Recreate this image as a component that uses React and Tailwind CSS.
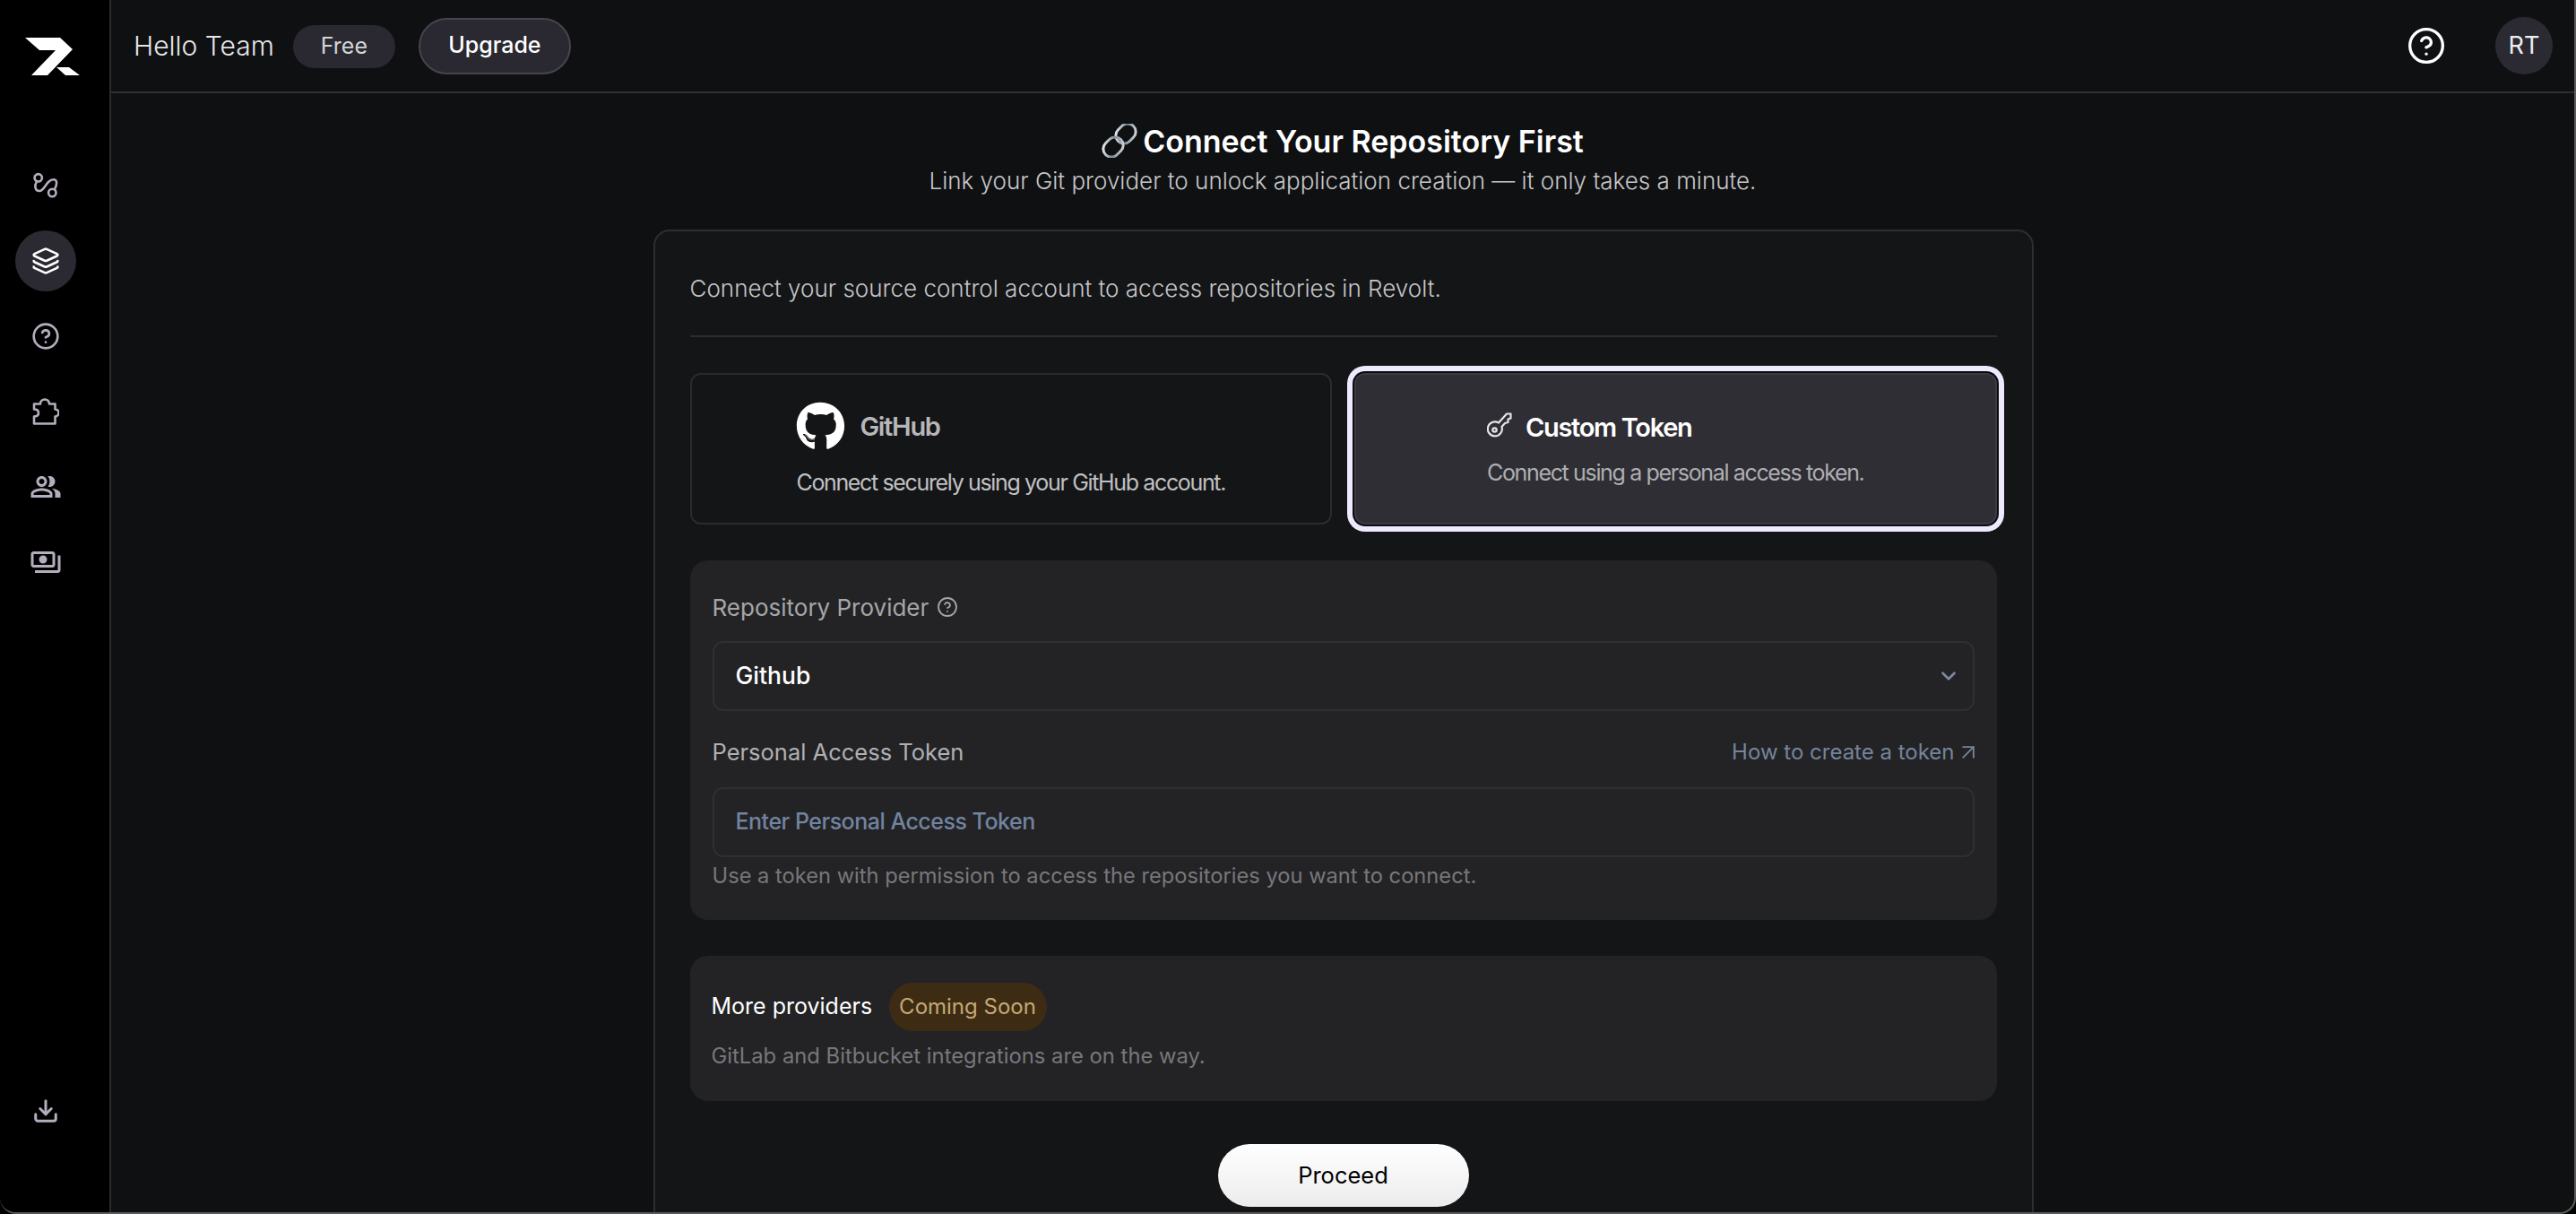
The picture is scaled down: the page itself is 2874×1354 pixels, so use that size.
import React from 'react';
import { ChevronDown, CircleHelp, Download, Layers, ArrowUpRight } from 'lucide-react';
import { FaGithub } from 'react-icons/fa';
import { MdOutlinePeopleAlt, MdOutlinePayments } from 'react-icons/md';

const Logo = () => (
  <svg width="62" height="42" viewBox="0 0 62 42" fill="#ffffff">
    <path d="M0 0H39L53 13L25 42H7L34 14H16Z" />
    <path d="M35 33H49L61 42H45Z" />
  </svg>
);

const RouteIcon = () => (
  <svg width="30" height="30" viewBox="0 0 30 30" fill="none" stroke="#b4adbd" strokeWidth="2.6" strokeLinecap="round">
    <circle cx="6.7" cy="6.3" r="4.2" />
    <circle cx="22.3" cy="23" r="4.2" />
    <path d="M5 10.5C2 15 3 21 8 21C12 21 14 15 18 11C22 7 28 7 27 13C27 15 26 17 25 19" />
  </svg>
);

const PuzzleIcon = () => (
  <svg width="30" height="30" viewBox="0 0 30 30" fill="none" stroke="#b4adbd" strokeWidth="2.6" strokeLinejoin="round">
    <path d="M2 28.5H25.5V20.5C28.5 20.5 29.5 18 29.5 16.5C29.5 14.5 28 12.5 25.5 12.5V6.5H19C19 3.5 17 1.5 14 1.5C11 1.5 9 3.5 9 6.5H2V12.5C5 12.5 7 14 7 16.5C7 19 5 20.5 2 20.5Z" />
  </svg>
);

const KeyIcon = () => (
  <svg width="28" height="28" viewBox="0 0 28 28" fill="none" stroke="#e5e5e8" strokeWidth="2.2" strokeLinejoin="round" className="shrink-0 -mt-[5px]">
    <path d="M13 11.5L22 1.5H26.5V6.5L23.5 7.5V11L20 12L16.5 16A8 8 0 1 1 13 11.5Z" />
    <circle cx="8.5" cy="19.5" r="2.2" />
  </svg>
);

const LinkEmoji = () => (
  <svg width="40" height="38" viewBox="0 0 40 38" fill="none" strokeWidth="3">
    <defs>
      <linearGradient id="chain" x1="0" y1="1" x2="1" y2="0">
        <stop offset="0" stopColor="#ffffff" />
        <stop offset="0.5" stopColor="#7f8b96" />
        <stop offset="1" stopColor="#dfe6ea" />
      </linearGradient>
    </defs>
    <rect x="-9" y="-6" width="18" height="24" rx="9" transform="translate(27 11) rotate(45) translate(0 -6)" stroke="url(#chain)" />
    <rect x="-9" y="-6" width="18" height="24" rx="9" transform="translate(13 26) rotate(45) translate(0 -6)" stroke="url(#chain)" />
  </svg>
);

const NavItem = ({ active, children }) => (
  <div className={`w-[68px] h-[68px] rounded-full flex items-center justify-center ${active ? 'bg-[#2b2a32] text-white' : 'text-[#b4adbd]'}`}>
    {children}
  </div>
);

const Sidebar = () => (
  <aside className="w-[124px] shrink-0 h-full bg-black border-r-2 border-[#2a2a2c] flex flex-col">
    <div className="h-[173px] w-full pt-[42px] pl-[28px]">
      <Logo />
    </div>
    <nav className="flex flex-col gap-4 ml-[17px]">
      <NavItem><RouteIcon /></NavItem>
      <NavItem active><Layers size={32} strokeWidth={2} /></NavItem>
      <NavItem><CircleHelp size={32} strokeWidth={2} /></NavItem>
      <NavItem><PuzzleIcon /></NavItem>
      <NavItem><MdOutlinePeopleAlt size={36} /></NavItem>
      <NavItem><MdOutlinePayments size={36} /></NavItem>
    </nav>
    <div className="mt-auto mb-[98px] ml-[36px]">
      <Download size={30} strokeWidth={2.4} className="text-[#b4adbd]" />
    </div>
  </aside>
);

const Header = () => (
  <header className="h-[104px] shrink-0 border-b-2 border-[#2c2f36] flex items-center pl-[25px] pr-[24px]">
    <span className="text-[30px] font-light text-[#e6e6e8]">Hello Team</span>
    <span className="ml-[21px] mt-[2px] h-[48px] w-[114px] rounded-full bg-[#2a2932] flex items-center justify-center text-[25px] text-[#d4d4d8]">Free</span>
    <button className="ml-[26px] h-[63px] w-[170px] rounded-full bg-[#2a2932] border-2 border-[#45444f] text-[25px] font-medium text-white">Upgrade</button>
    <CircleHelp size={44} strokeWidth={1.8} className="ml-auto text-white" />
    <div className="ml-[55px] w-[64px] h-[64px] rounded-full bg-[#2b2a32] flex items-center justify-center text-[27px] text-[#eeeeee]">RT</div>
  </header>
);

const OptionCards = () => (
  <div className="mt-[40px] grid grid-cols-2 gap-[25px]">
    <div className="h-[169px] rounded-[12px] border-2 border-[#2a2b30] bg-[#141517] flex flex-col items-center justify-center">
      <div className="pt-[5px]">
        <div className="flex items-center gap-[16px]">
          <FaGithub size={55} className="text-white" />
          <span className="text-[29px] font-semibold text-[#b7b7ba] tracking-[-1.33px]">GitHub</span>
        </div>
        <p className="mt-[17px] text-[25px] text-[#c0c0c3] tracking-[-1.35px]">Connect securely using your GitHub account.</p>
      </div>
    </div>
    <div className="h-[169px] rounded-[12px] border-2 border-[#3a3a40] bg-[#2f2e34] shadow-[0_0_0_2px_#0c0c0e,0_0_0_8px_#efe9ff] flex flex-col items-center justify-center">
      <div>
        <div className="flex items-center gap-[15px]">
          <KeyIcon />
          <span className="text-[29px] font-semibold text-white tracking-[-1.33px]">Custom Token</span>
        </div>
        <p className="mt-[10px] text-[25px] text-[#aeaeb2] tracking-[-1.35px]">Connect using a personal access token.</p>
      </div>
    </div>
  </div>
);

const TokenForm = () => (
  <div className="mt-[40px] h-[401px] rounded-[20px] bg-[#232325] px-[25px] pt-[36px]">
    <div className="flex items-center gap-[9px] h-[32px] text-[26px] text-[#a6a6a9]">
      Repository Provider
      <CircleHelp size={24} strokeWidth={1.8} className="text-[#a6a6a9]" />
    </div>
    <div className="mt-[22px] h-[78px] rounded-[12px] border-2 border-[#2d2f36] flex items-center justify-between pl-[24px] pr-[14px]">
      <span className="text-[26.5px] font-medium text-white">Github</span>
      <ChevronDown size={26} strokeWidth={2.5} className="text-[#7b88a0]" />
    </div>
    <div className="mt-[30px] h-[32px] flex items-center justify-between">
      <span className="text-[25.5px] text-[#b0b0b3]">Personal Access Token</span>
      <span className="flex items-center gap-[1px] text-[24px] text-[#75849c]">
        How to create a token
        <ArrowUpRight size={28} strokeWidth={1.6} className="-mr-[7px]" />
      </span>
    </div>
    <div className="mt-[23px] h-[78px] rounded-[12px] border-2 border-[#2d2f36] flex items-center pl-[24px]">
      <span className="text-[25px] font-medium text-[#7283a0] tracking-[-0.5px]">Enter Personal Access Token</span>
    </div>
    <p className="mt-[3px] text-[23.7px] text-[#77777b]">Use a token with permission to access the repositories you want to connect.</p>
  </div>
);

const MoreProviders = () => (
  <div className="mt-[40px] h-[162px] rounded-[20px] bg-[#232325] px-[24px] pt-[30px]">
    <div className="flex items-center gap-[16px]">
      <span className="w-[182px] whitespace-nowrap text-[25px] text-white">More providers</span>
      <span className="h-[54px] w-[176px] rounded-full bg-[#3d2c13] flex items-center justify-center text-[24px] text-[#c5a874]">Coming Soon</span>
    </div>
    <p className="mt-[10px] text-[23.8px] text-[#77777b]">GitLab and Bitbucket integrations are on the way.</p>
  </div>
);

const App = () => (
  <div className="w-[2874px] h-[1354px] bg-black overflow-hidden" style={{ fontFamily: 'Inter, "Liberation Sans", sans-serif' }}>
    <div className="w-full h-full flex overflow-hidden rounded-b-[18px] border-r-2 border-b-2 border-[#5a5a5a] bg-[#0f1012]">
      <Sidebar />
      <div className="flex-1 min-w-0 h-full flex flex-col overflow-hidden">
        <Header />
        <main className="flex-1 min-h-0 flex flex-col items-center pt-[31px]">
          <h1 className="flex items-center gap-[6px] h-[44px] text-[34px] font-semibold text-white">
            <LinkEmoji /> Connect Your Repository First
          </h1>
          <p className="mt-[3px] h-[44px] flex items-center text-[26px] font-light text-[#c6c6c8]">Link your Git provider to unlock application creation — it only takes a minute.</p>
          <section className="mt-[35px] ml-[1px] w-[1540px] shrink-0 rounded-[18px] border-2 border-[#2b2e33] bg-[#141517] px-[39px] pt-[46px] pb-[60px]">
            <p className="h-[34px] flex items-center text-[26px] font-light text-[#c6c6c8]">Connect your source control account to access repositories in Revolt.</p>
            <div className="mt-[36px] h-[2px] bg-[#2a2d32]" />
            <OptionCards />
            <TokenForm />
            <MoreProviders />
            <div className="mt-[48px] flex justify-center">
              <button className="h-[70px] w-[280px] rounded-full bg-gradient-to-b from-white to-[#ececec] text-[25.5px] text-black">Proceed</button>
            </div>
          </section>
        </main>
      </div>
    </div>
  </div>
);

export default App;
